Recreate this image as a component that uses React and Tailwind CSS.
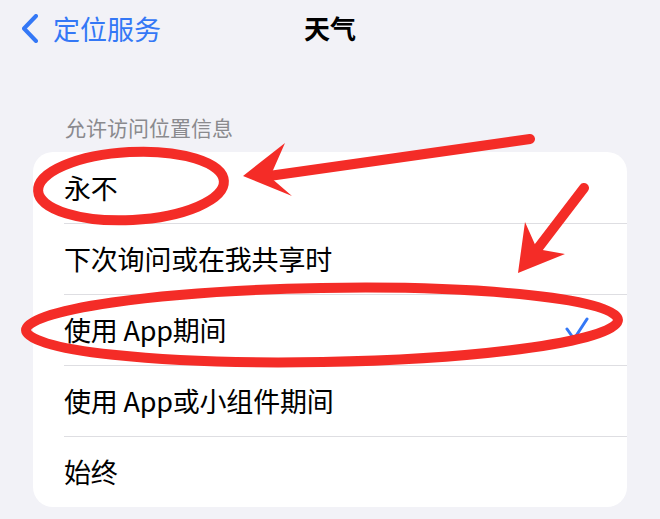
import React from 'react';

const options = [
  { label: '永不' },
  { label: '下次询问或在我共享时' },
  { label: '使用 App期间', checked: true },
  { label: '使用 App或小组件期间' },
  { label: '始终' },
];

function Annotations() {
  // red hand-drawn marks over the screenshot
  return (
    <svg className="absolute inset-0 pointer-events-none" width="660" height="519" viewBox="0 0 660 519">
      <g fill="none" stroke="#f42c27" strokeLinecap="round">
        <ellipse cx="131" cy="186" rx="93" ry="34" strokeWidth="10" transform="rotate(-3 131 186)" />
        <ellipse cx="322" cy="325" rx="296" ry="37" strokeWidth="10" transform="rotate(-1 322 325)" />
        <line x1="530" y1="139" x2="262" y2="177" strokeWidth="10" />
        <line x1="584" y1="188" x2="532" y2="256" strokeWidth="10" />
      </g>
      <g fill="#f42c27">
        <polygon points="243,176 285,143 270,177 292,196" />
        <polygon points="518,273 525,222 537,249 565,254" />
      </g>
    </svg>
  );
}

export default function App() {
  return (
    <div className="relative w-[660px] h-[519px] overflow-hidden bg-[#f2f2f7] font-['Noto_Sans_CJK_SC',sans-serif]">
      <div className="grid grid-cols-[1fr_auto_1fr] items-center h-[56px]">
        <div className="flex items-center pl-[22px] gap-[15px] text-[#3478f6]">
          <svg width="16" height="29" viewBox="0 0 16 29">
            <polyline points="14,2 2,14.5 14,27" fill="none" stroke="#3478f6" strokeWidth="4" strokeLinecap="round" strokeLinejoin="round" />
          </svg>
          <span className="text-[27px] leading-none">定位服务</span>
        </div>
        <div className="text-[26px] font-bold leading-none text-black">天气</div>
        <div />
      </div>

      <div className="mt-[58px] pl-[65px] text-[21px] leading-[26px] text-[#8a8a8e]">允许访问位置信息</div>

      <div className="mx-[33px] mt-[12px] rounded-[20px] bg-white overflow-hidden">
        {options.map((opt, i) => (
          <div key={i} className="relative flex items-center justify-between h-[71px] pl-[31px] pr-[38px]">
            <span className="text-[27px] leading-none text-black tracking-[-0.2px]">{opt.label}</span>
            {opt.checked && (
              <svg width="24" height="25" viewBox="0 0 24 25">
                <polyline points="2,12 9,22 22,2" fill="none" stroke="#3478f6" strokeWidth="3" strokeLinecap="round" strokeLinejoin="round" />
              </svg>
            )}
            {i > 0 && <div className="absolute top-0 left-[31px] right-0 h-px bg-[#dedee2]" />}
          </div>
        ))}
      </div>

      <Annotations />
    </div>
  );
}
